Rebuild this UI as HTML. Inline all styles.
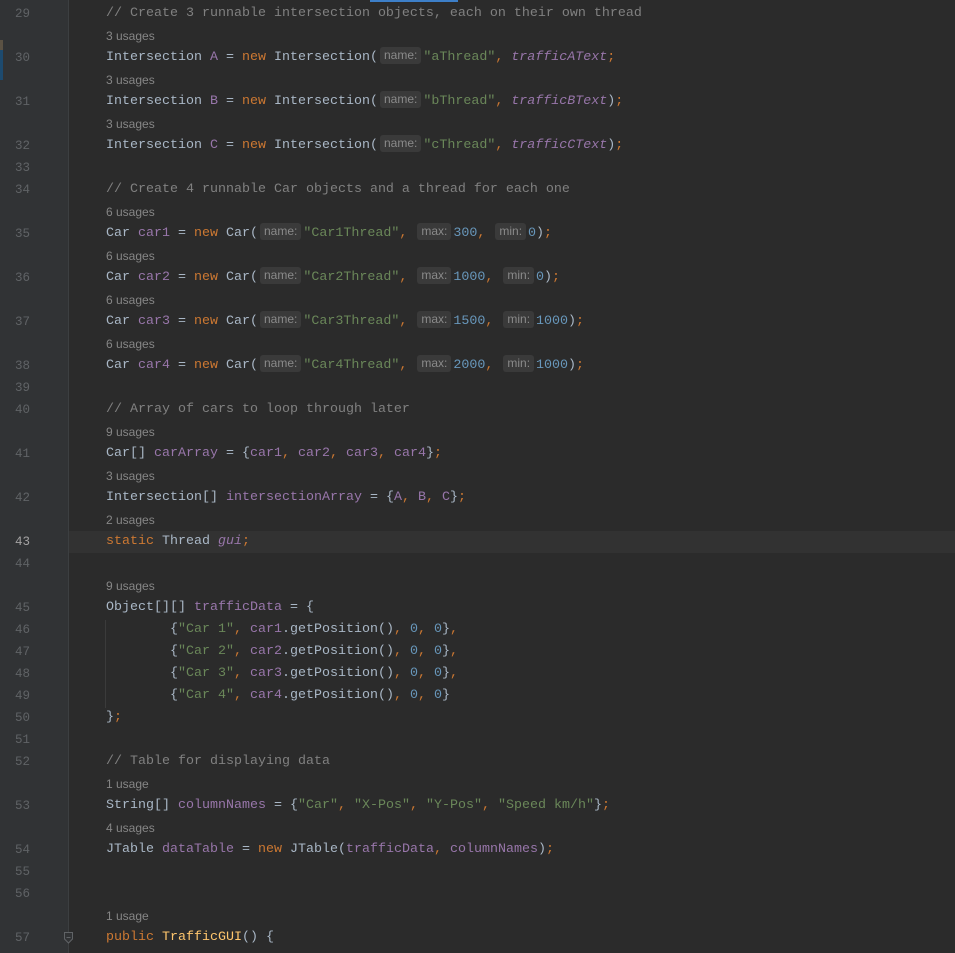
<!DOCTYPE html>
<html><head><meta charset="utf-8"><style>
html,body{margin:0;padding:0}
body{width:955px;height:953px;background:#2b2b2b;position:relative;overflow:hidden;font-family:"Liberation Mono",monospace;font-size:13.33px;color:#a9b7c6}
.gut{position:absolute;left:0;top:0;width:68px;height:953px;background:#313335}
.sep{position:absolute;left:68px;top:0;width:1px;height:953px;background:#3c3f41}
.row{position:absolute;left:0;height:22px;line-height:22px;width:955px;white-space:pre}
.ln{position:absolute;left:0;width:30px;text-align:right;color:#606366;font-size:12.5px}
.code{position:absolute;left:106px}
.us{position:absolute;left:106px;font-family:"Liberation Sans",sans-serif;font-size:12px;color:#868686}
.k{color:#cc7832}.s{color:#6a8759}.n{color:#6897bb}.f{color:#9876aa}.c{color:#808080}.i{font-style:italic}.m{color:#ffc66d}
.h{display:inline-block;font-family:"Liberation Sans",sans-serif;font-size:12px;color:#8a8a8a;background:#3a3a3a;border-radius:3px;line-height:17px;padding:0 4px;margin:0 2px 0 2px;vertical-align:1px}
</style></head><body>
<div class="gut"></div><div class="sep"></div>
<div style="position:absolute;left:0;top:40px;width:3px;height:10px;background:#5b5244"></div>
<div style="position:absolute;left:0;top:50px;width:3px;height:30px;background:#1d4a6e"></div>
<div style="position:absolute;left:370px;top:0;width:88px;height:2px;background:#3d7fc8"></div>
<div style="position:absolute;left:69px;top:531px;width:886px;height:22px;background:#323232"></div>
<div style="position:absolute;left:105px;top:620px;width:1px;height:88px;background:#3b3b3b"></div>

<div class="row" style="top:3px"><span class="ln">29</span><span class="code c">// Create 3 runnable intersection objects, each on their own thread</span></div>
<div class="row" style="top:25px"><span class="us">3 usages</span></div>
<div class="row" style="top:47px"><span class="ln">30</span><span class="code">Intersection <span class="f">A</span> = <span class="k">new</span> Intersection(<span class="h">name:</span><span class="s">"aThread"</span><span class="k">, </span><span class="f i">trafficAText</span><span class="k">;</span></span></div>
<div class="row" style="top:69px"><span class="us">3 usages</span></div>
<div class="row" style="top:91px"><span class="ln">31</span><span class="code">Intersection <span class="f">B</span> = <span class="k">new</span> Intersection(<span class="h">name:</span><span class="s">"bThread"</span><span class="k">, </span><span class="f i">trafficBText</span>)<span class="k">;</span></span></div>
<div class="row" style="top:113px"><span class="us">3 usages</span></div>
<div class="row" style="top:135px"><span class="ln">32</span><span class="code">Intersection <span class="f">C</span> = <span class="k">new</span> Intersection(<span class="h">name:</span><span class="s">"cThread"</span><span class="k">, </span><span class="f i">trafficCText</span>)<span class="k">;</span></span></div>
<div class="row" style="top:157px"><span class="ln">33</span></div>
<div class="row" style="top:179px"><span class="ln">34</span><span class="code c">// Create 4 runnable Car objects and a thread for each one</span></div>
<div class="row" style="top:201px"><span class="us">6 usages</span></div>
<div class="row" style="top:223px"><span class="ln">35</span><span class="code">Car <span class="f">car1</span> = <span class="k">new</span> Car(<span class="h">name:</span><span class="s">"Car1Thread"</span><span class="k">, </span><span class="h">max:</span><span class="n">300</span><span class="k">, </span><span class="h">min:</span><span class="n">0</span>)<span class="k">;</span></span></div>
<div class="row" style="top:245px"><span class="us">6 usages</span></div>
<div class="row" style="top:267px"><span class="ln">36</span><span class="code">Car <span class="f">car2</span> = <span class="k">new</span> Car(<span class="h">name:</span><span class="s">"Car2Thread"</span><span class="k">, </span><span class="h">max:</span><span class="n">1000</span><span class="k">, </span><span class="h">min:</span><span class="n">0</span>)<span class="k">;</span></span></div>
<div class="row" style="top:289px"><span class="us">6 usages</span></div>
<div class="row" style="top:311px"><span class="ln">37</span><span class="code">Car <span class="f">car3</span> = <span class="k">new</span> Car(<span class="h">name:</span><span class="s">"Car3Thread"</span><span class="k">, </span><span class="h">max:</span><span class="n">1500</span><span class="k">, </span><span class="h">min:</span><span class="n">1000</span>)<span class="k">;</span></span></div>
<div class="row" style="top:333px"><span class="us">6 usages</span></div>
<div class="row" style="top:355px"><span class="ln">38</span><span class="code">Car <span class="f">car4</span> = <span class="k">new</span> Car(<span class="h">name:</span><span class="s">"Car4Thread"</span><span class="k">, </span><span class="h">max:</span><span class="n">2000</span><span class="k">, </span><span class="h">min:</span><span class="n">1000</span>)<span class="k">;</span></span></div>
<div class="row" style="top:377px"><span class="ln">39</span></div>
<div class="row" style="top:399px"><span class="ln">40</span><span class="code c">// Array of cars to loop through later</span></div>
<div class="row" style="top:421px"><span class="us">9 usages</span></div>
<div class="row" style="top:443px"><span class="ln">41</span><span class="code">Car[] <span class="f">carArray</span> = {<span class="f">car1</span><span class="k">, </span><span class="f">car2</span><span class="k">, </span><span class="f">car3</span><span class="k">, </span><span class="f">car4</span>}<span class="k">;</span></span></div>
<div class="row" style="top:465px"><span class="us">3 usages</span></div>
<div class="row" style="top:487px"><span class="ln">42</span><span class="code">Intersection[] <span class="f">intersectionArray</span> = {<span class="f">A</span><span class="k">, </span><span class="f">B</span><span class="k">, </span><span class="f">C</span>}<span class="k">;</span></span></div>
<div class="row" style="top:509px"><span class="us">2 usages</span></div>
<div class="row" style="top:531px"><span class="ln" style="color:#a4a3a3">43</span><span class="code"><span class="k">static</span> Thread <span class="f i">gui</span><span class="k">;</span></span></div>
<div class="row" style="top:553px"><span class="ln">44</span></div>
<div class="row" style="top:575px"><span class="us">9 usages</span></div>
<div class="row" style="top:597px"><span class="ln">45</span><span class="code">Object[][] <span class="f">trafficData</span> = {</span></div>
<div class="row" style="top:619px"><span class="ln">46</span><span class="code">        {<span class="s">"Car 1"</span><span class="k">, </span><span class="f">car1</span>.getPosition()<span class="k">, </span><span class="n">0</span><span class="k">, </span><span class="n">0</span>}<span class="k">,</span></span></div>
<div class="row" style="top:641px"><span class="ln">47</span><span class="code">        {<span class="s">"Car 2"</span><span class="k">, </span><span class="f">car2</span>.getPosition()<span class="k">, </span><span class="n">0</span><span class="k">, </span><span class="n">0</span>}<span class="k">,</span></span></div>
<div class="row" style="top:663px"><span class="ln">48</span><span class="code">        {<span class="s">"Car 3"</span><span class="k">, </span><span class="f">car3</span>.getPosition()<span class="k">, </span><span class="n">0</span><span class="k">, </span><span class="n">0</span>}<span class="k">,</span></span></div>
<div class="row" style="top:685px"><span class="ln">49</span><span class="code">        {<span class="s">"Car 4"</span><span class="k">, </span><span class="f">car4</span>.getPosition()<span class="k">, </span><span class="n">0</span><span class="k">, </span><span class="n">0</span>}</span></div>
<div class="row" style="top:707px"><span class="ln">50</span><span class="code">}<span class="k">;</span></span></div>
<div class="row" style="top:729px"><span class="ln">51</span></div>
<div class="row" style="top:751px"><span class="ln">52</span><span class="code c">// Table for displaying data</span></div>
<div class="row" style="top:773px"><span class="us">1 usage</span></div>
<div class="row" style="top:795px"><span class="ln">53</span><span class="code">String[] <span class="f">columnNames</span> = {<span class="s">"Car"</span><span class="k">, </span><span class="s">"X-Pos"</span><span class="k">, </span><span class="s">"Y-Pos"</span><span class="k">, </span><span class="s">"Speed km/h"</span>}<span class="k">;</span></span></div>
<div class="row" style="top:817px"><span class="us">4 usages</span></div>
<div class="row" style="top:839px"><span class="ln">54</span><span class="code">JTable <span class="f">dataTable</span> = <span class="k">new</span> JTable(<span class="f">trafficData</span><span class="k">, </span><span class="f">columnNames</span>)<span class="k">;</span></span></div>
<div class="row" style="top:861px"><span class="ln">55</span></div>
<div class="row" style="top:883px"><span class="ln">56</span></div>
<div class="row" style="top:905px"><span class="us">1 usage</span></div>
<div class="row" style="top:927px"><span class="ln">57</span><span class="code"><span class="k">public</span> <span class="m">TrafficGUI</span>() {</span></div>
<svg style="position:absolute;left:63px;top:932px" width="11" height="12" viewBox="0 0 11 12"><path d="M1.5 0.5H9.5V7L5.5 11L1.5 7Z" fill="#313335" stroke="#606366"/><path d="M3.5 5.5H7.5" stroke="#606366"/></svg>
</body></html>
